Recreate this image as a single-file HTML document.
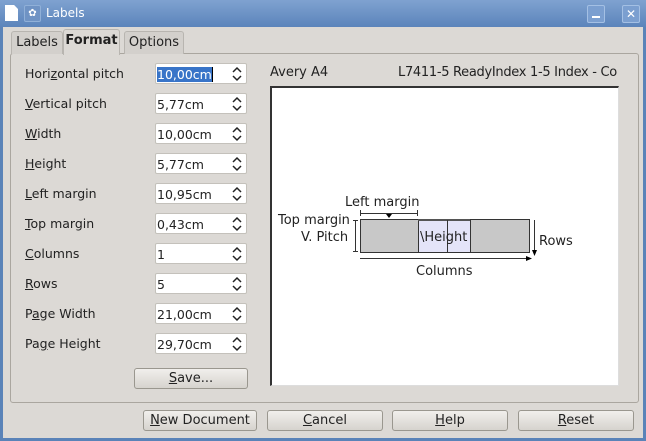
<!DOCTYPE html>
<html><head><style>
body{margin:0;width:646px;height:441px;overflow:hidden;font-family:"DejaVu Sans","Liberation Sans",sans-serif;font-size:12px;color:#222}
.win{position:absolute;left:0;top:0;width:646px;height:441px;background:#5a83b8}
.title{position:absolute;left:0;top:0;width:646px;height:27px;background:linear-gradient(#7fa2d0,#5b84bb);color:#fff}
.body{position:absolute;left:3px;top:27px;width:640px;height:411px;background:#dcd9d5}
.abs{position:absolute}
.tab{position:absolute;top:31px;height:22px;background:#d3d0cc;border:1px solid #b8b5b0;border-bottom:none;border-radius:3px 3px 0 0;line-height:22px;text-align:center;font-size:13px}
.panel{position:absolute;left:10px;top:53px;width:627px;height:348px;border:1px solid #aaa69f;border-radius:3px;background:#dcd9d5}
.lab{position:absolute;left:25px;font-size:12.5px}
.inp{position:absolute;left:155px;width:92px;height:21px;background:#fff;border:1px solid #c4c1bb;border-radius:2px;line-height:21px;box-sizing:border-box;padding-left:1px;font-size:12.5px}
.inp svg{position:absolute;right:3px;top:2px}
.btn{position:absolute;height:21px;border:1px solid #9a978f;border-radius:3px;background:linear-gradient(#f1efec,#d6d3ce);text-align:center;line-height:20px;box-sizing:border-box;font-size:13px}
u{text-decoration:underline}
</style></head><body>
<div class="win">
<div class="title">
 <div class="abs" style="left:5px;top:5px;width:13px;height:16px;background:#fff;clip-path:polygon(0 0,70% 0,100% 25%,100% 100%,0 100%)"></div>
 <div class="abs" style="left:24px;top:5px;width:15px;height:15px;background:#6f93c4;border:1px solid #90b0d8;border-radius:2px;color:#fff;font-size:10px;text-align:center;line-height:15px">✿</div>
 <div class="abs" style="left:46px;top:6px;font-size:12px">Labels</div>
 <div class="abs" style="left:587px;top:5px;width:16px;height:16px;background:#7b9fd0;border:1px solid #a4c0e4;border-radius:2px"><div class="abs" style="left:4px;top:10px;width:8px;height:2px;background:#fff"></div></div>
 <div class="abs" style="left:622px;top:5px;width:16px;height:16px;background:#7b9fd0;border:1px solid #a4c0e4;border-radius:2px;color:#fff;font-weight:bold;font-size:12px;text-align:center;line-height:16px">✕</div>
</div>
<div class="body"></div>
<div class="panel"></div>
<div class="tab" style="left:11px;width:50px">Labels</div>
<div class="tab" style="left:63px;top:29px;height:25px;width:55px;background:#dcd9d5;font-weight:bold;border-bottom:none;z-index:2">Format</div>
<div class="tab" style="left:124px;width:58px">Options</div>

<div class="lab" style="top:66px">Hori<u>z</u>ontal pitch</div>
<div class="lab" style="top:96px"><u>V</u>ertical pitch</div>
<div class="lab" style="top:126px"><u>W</u>idth</div>
<div class="lab" style="top:156px"><u>H</u>eight</div>
<div class="lab" style="top:186px"><u>L</u>eft margin</div>
<div class="lab" style="top:216px"><u>T</u>op margin</div>
<div class="lab" style="top:246px"><u>C</u>olumns</div>
<div class="lab" style="top:276px"><u>R</u>ows</div>
<div class="lab" style="top:306px">P<u>a</u>ge Width</div>
<div class="lab" style="top:336px">Pa<u>g</u>e Height</div>

<div class="inp" style="top:63px"><span style="background:#3874c8;color:#fff">10,00cm</span><span style="border-left:1px solid #000"></span><svg width="12" height="16"><path d="M2 6L6 2L10 6M2 10L6 14L10 10" fill="none" stroke="#222" stroke-width="1.5"/></svg></div>
<div class="inp" style="top:93px">5,77cm<svg width="12" height="16"><path d="M2 6L6 2L10 6M2 10L6 14L10 10" fill="none" stroke="#222" stroke-width="1.5"/></svg></div>
<div class="inp" style="top:123px">10,00cm<svg width="12" height="16"><path d="M2 6L6 2L10 6M2 10L6 14L10 10" fill="none" stroke="#222" stroke-width="1.5"/></svg></div>
<div class="inp" style="top:153px">5,77cm<svg width="12" height="16"><path d="M2 6L6 2L10 6M2 10L6 14L10 10" fill="none" stroke="#222" stroke-width="1.5"/></svg></div>
<div class="inp" style="top:183px">10,95cm<svg width="12" height="16"><path d="M2 6L6 2L10 6M2 10L6 14L10 10" fill="none" stroke="#222" stroke-width="1.5"/></svg></div>
<div class="inp" style="top:213px">0,43cm<svg width="12" height="16"><path d="M2 6L6 2L10 6M2 10L6 14L10 10" fill="none" stroke="#222" stroke-width="1.5"/></svg></div>
<div class="inp" style="top:243px">1<svg width="12" height="16"><path d="M2 6L6 2L10 6M2 10L6 14L10 10" fill="none" stroke="#222" stroke-width="1.5"/></svg></div>
<div class="inp" style="top:273px">5<svg width="12" height="16"><path d="M2 6L6 2L10 6M2 10L6 14L10 10" fill="none" stroke="#222" stroke-width="1.5"/></svg></div>
<div class="inp" style="top:303px">21,00cm<svg width="12" height="16"><path d="M2 6L6 2L10 6M2 10L6 14L10 10" fill="none" stroke="#222" stroke-width="1.5"/></svg></div>
<div class="inp" style="top:333px">29,70cm<svg width="12" height="16"><path d="M2 6L6 2L10 6M2 10L6 14L10 10" fill="none" stroke="#222" stroke-width="1.5"/></svg></div>

<div class="btn" style="left:134px;top:368px;width:114px"><u>S</u>ave...</div>

<div class="abs" style="left:270px;top:65px;font-size:13px">Avery A4</div>
<div class="abs" style="left:398px;top:65px;width:223px;overflow:hidden;white-space:nowrap;font-size:13px;letter-spacing:-0.3px">L7411-5 ReadyIndex 1-5 Index - Co</div>
<div class="abs" style="left:270px;top:86px;width:349px;height:300px;background:#fff;border-left:2px solid #333;border-top:2px solid #333;border-right:1px solid #ddd;border-bottom:1px solid #ddd;box-sizing:border-box"></div>

<svg class="abs" style="left:270px;top:180px" width="320" height="110">
 <rect x="90.5" y="39.5" width="169" height="33" fill="#c8c8c8" stroke="#333"/>
 <rect x="148.5" y="39.5" width="52" height="33" fill="#e4e4f8" stroke="#333"/>
 <line x1="148" y1="40" x2="200" y2="40" stroke="#555" stroke-width="2"/>
 <line x1="177.5" y1="40" x2="177.5" y2="72" stroke="#333"/>
 <line x1="90" y1="33.5" x2="148" y2="33.5" stroke="#333"/>
 <line x1="90.5" y1="30" x2="90.5" y2="36" stroke="#333"/><line x1="147.5" y1="30" x2="147.5" y2="36" stroke="#333"/>
 <polygon points="116,34 122,34 119,38" fill="#000"/>
 <line x1="85.5" y1="40" x2="85.5" y2="72" stroke="#333"/>
 <line x1="83" y1="40.5" x2="88" y2="40.5" stroke="#333"/><line x1="83" y1="71.5" x2="88" y2="71.5" stroke="#333"/>
 <line x1="264.5" y1="40" x2="264.5" y2="72" stroke="#333"/>
 <polygon points="262,70 267,70 264.5,76" fill="#000"/>
 <line x1="90" y1="78.5" x2="258" y2="78.5" stroke="#333"/>
 <polygon points="256,76 256,81 262,78.5" fill="#000"/>
 <text x="75" y="26" font-family="DejaVu Sans" font-size="13" fill="#222">Left margin</text>
 <text x="8" y="44" font-family="DejaVu Sans" font-size="13" fill="#222">Top margin</text>
 <text x="31" y="61" font-family="DejaVu Sans" font-size="13" fill="#222">V. Pitch</text>
 <text x="150" y="61" font-family="DejaVu Sans" font-size="13" fill="#222">\Height</text>
 <text x="269" y="65" font-family="DejaVu Sans" font-size="13" fill="#222">Rows</text>
 <text x="146" y="95" font-family="DejaVu Sans" font-size="13" fill="#222">Columns</text>
</svg>

<div class="btn" style="left:143px;top:410px;width:114px"><u>N</u>ew Document</div>
<div class="btn" style="left:267px;top:410px;width:116px"><u>C</u>ancel</div>
<div class="btn" style="left:392px;top:410px;width:116px"><u>H</u>elp</div>
<div class="btn" style="left:518px;top:410px;width:116px"><u>R</u>eset</div>
</div>
</body></html>
